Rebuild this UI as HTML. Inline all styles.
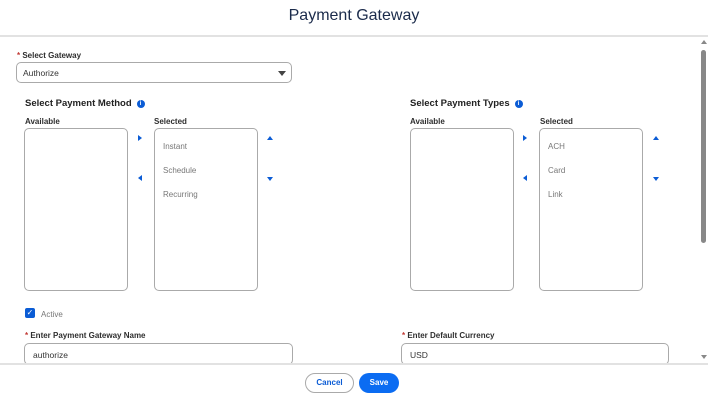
<!DOCTYPE html>
<html><head><meta charset="utf-8"><style>
*{margin:0;padding:0;box-sizing:border-box}
body{width:708px;height:401px;overflow:hidden;background:#fff;font-family:"Liberation Sans",sans-serif;position:relative;color:#181818}
.a{position:absolute}
.lbl{font-size:8px;font-weight:bold;color:#2e2e2e}
.box{position:absolute;border:1px solid #aaa;border-radius:5px;background:#fff}
.it{font-size:8px;color:#777;position:absolute}
.h{font-size:9.5px;font-weight:bold;color:#222}
.info{display:inline-block;width:8px;height:8px;border-radius:50%;background:#0b5cd5;color:#fff;font-size:6px;text-align:center;line-height:8px;vertical-align:1px;margin-left:5px}
.tri{position:absolute;width:0;height:0}
.r{border-top:3.5px solid transparent;border-bottom:3.5px solid transparent;border-left:4px solid #0b5cd5}
.l{border-top:3.5px solid transparent;border-bottom:3.5px solid transparent;border-right:4px solid #0b5cd5}
.u{border-left:3.5px solid transparent;border-right:3.5px solid transparent;border-bottom:4px solid #0b5cd5}
.d{border-left:3.5px solid transparent;border-right:3.5px solid transparent;border-top:4px solid #0b5cd5}
.req{color:#c23934}
.inp{position:absolute;border:1px solid #aaa;border-radius:5px;height:21px;font-size:8.5px;color:#333;padding:6px 8px}
</style></head><body>
<div class="a" style="left:0;top:7px;width:708px;text-align:center;font-size:16px;color:#1b2b4b">Payment Gateway</div>
<div class="a" style="left:0;top:35px;width:708px;height:2px;background:#e2e2e2"></div>

<div class="a lbl" style="left:17px;top:51px"><span class="req">*</span> Select Gateway</div>
<div class="inp" style="left:16px;top:62px;width:276px;height:21px;padding:5px 6px">Authorize</div>
<div class="tri d" style="left:278px;top:71px;border-top-color:#444;border-left-width:4px;border-right-width:4px;border-top-width:5px"></div>

<div class="a h" style="left:25px;top:98px">Select Payment Method<span class="info">i</span></div>
<div class="a lbl" style="left:25px;top:117px">Available</div>
<div class="a lbl" style="left:154px;top:117px">Selected</div>
<div class="box" style="left:24px;top:128px;width:104px;height:163px"></div>
<div class="box" style="left:154px;top:128px;width:104px;height:163px"></div>
<div class="it" style="left:163px;top:142px">Instant</div>
<div class="it" style="left:163px;top:166px">Schedule</div>
<div class="it" style="left:163px;top:190px">Recurring</div>
<div class="tri r" style="left:138px;top:135px"></div>
<div class="tri l" style="left:138px;top:175px"></div>
<div class="tri u" style="left:267px;top:136px"></div>
<div class="tri d" style="left:267px;top:177px"></div>

<div class="a h" style="left:410px;top:98px">Select Payment Types<span class="info">i</span></div>
<div class="a lbl" style="left:410px;top:117px">Available</div>
<div class="a lbl" style="left:540px;top:117px">Selected</div>
<div class="box" style="left:410px;top:128px;width:104px;height:163px"></div>
<div class="box" style="left:539px;top:128px;width:104px;height:163px"></div>
<div class="it" style="left:548px;top:142px">ACH</div>
<div class="it" style="left:548px;top:166px">Card</div>
<div class="it" style="left:548px;top:190px">Link</div>
<div class="tri r" style="left:523px;top:135px"></div>
<div class="tri l" style="left:523px;top:175px"></div>
<div class="tri u" style="left:653px;top:136px"></div>
<div class="tri d" style="left:653px;top:177px"></div>

<div class="a" style="left:25px;top:308px;width:10px;height:10px;border-radius:2px;background:#0b5cd5;color:#fff;font-size:8px;line-height:10px;text-align:center">✓</div>
<div class="a" style="left:41px;top:310px;font-size:8px;color:#777">Active</div>

<div class="a lbl" style="left:25px;top:331px"><span class="req">*</span> Enter Payment Gateway Name</div>
<div class="inp" style="left:24px;top:343px;width:269px;height:22px">authorize</div>
<div class="a lbl" style="left:402px;top:331px"><span class="req">*</span> Enter Default Currency</div>
<div class="inp" style="left:401px;top:343px;width:268px;height:22px">USD</div>

<div class="a" style="left:701px;top:40px;width:0;height:0;border-left:3px solid transparent;border-right:3px solid transparent;border-bottom:4px solid #888"></div>
<div class="a" style="left:701px;top:50px;width:5px;height:193px;border-radius:3px;background:#888"></div>
<div class="a" style="left:701px;top:355px;width:0;height:0;border-left:3px solid transparent;border-right:3px solid transparent;border-top:4px solid #888"></div>

<div class="a" style="left:0;top:363px;width:708px;height:38px;background:#fff;border-top:2px solid #e2e2e2"></div>
<div class="a" style="left:305px;top:373px;width:49px;height:20px;border:1px solid #aaa;border-radius:10px;font-size:8px;font-weight:bold;color:#0b5cd5;text-align:center;line-height:18px">Cancel</div>
<div class="a" style="left:359px;top:373px;width:40px;height:20px;background:#0b6cf2;border-radius:10px;font-size:8px;font-weight:bold;color:#fff;text-align:center;line-height:20px">Save</div>
</body></html>
